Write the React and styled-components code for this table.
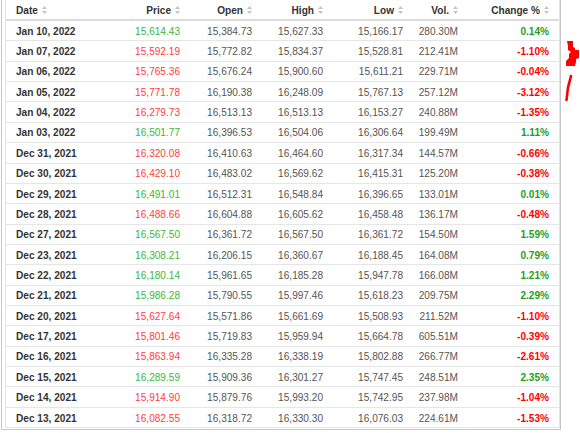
import React from 'react';
import styled, { createGlobalStyle } from 'styled-components';

const GlobalStyle = createGlobalStyle`
  body {
    margin: 0;
    background: #fff;
    font-family: 'Liberation Sans', Arial, sans-serif;
    overflow: hidden;
  }
`;

const rows = [
  ['Jan 10, 2022', '15,614.43', '15,384.73', '15,627.33', '15,166.17', '280.30M', '0.14%'],
  ['Jan 07, 2022', '15,592.19', '15,772.82', '15,834.37', '15,528.81', '212.41M', '-1.10%'],
  ['Jan 06, 2022', '15,765.36', '15,676.24', '15,900.60', '15,611.21', '229.71M', '-0.04%'],
  ['Jan 05, 2022', '15,771.78', '16,190.38', '16,248.09', '15,767.13', '257.12M', '-3.12%'],
  ['Jan 04, 2022', '16,279.73', '16,513.13', '16,513.13', '16,153.27', '240.88M', '-1.35%'],
  ['Jan 03, 2022', '16,501.77', '16,396.53', '16,504.06', '16,306.64', '199.49M', '1.11%'],
  ['Dec 31, 2021', '16,320.08', '16,410.63', '16,464.60', '16,317.34', '144.57M', '-0.66%'],
  ['Dec 30, 2021', '16,429.10', '16,483.02', '16,569.62', '16,415.31', '125.20M', '-0.38%'],
  ['Dec 29, 2021', '16,491.01', '16,512.31', '16,548.84', '16,396.65', '133.01M', '0.01%'],
  ['Dec 28, 2021', '16,488.66', '16,604.88', '16,605.62', '16,458.48', '136.17M', '-0.48%'],
  ['Dec 27, 2021', '16,567.50', '16,361.72', '16,567.50', '16,361.72', '154.50M', '1.59%'],
  ['Dec 23, 2021', '16,308.21', '16,206.15', '16,360.67', '16,188.45', '164.08M', '0.79%'],
  ['Dec 22, 2021', '16,180.14', '15,961.65', '16,185.28', '15,947.78', '166.08M', '1.21%'],
  ['Dec 21, 2021', '15,986.28', '15,790.55', '15,997.46', '15,618.23', '209.75M', '2.29%'],
  ['Dec 20, 2021', '15,627.64', '15,571.86', '15,661.69', '15,508.93', '211.52M', '-1.10%'],
  ['Dec 17, 2021', '15,801.46', '15,719.83', '15,959.94', '15,664.78', '605.51M', '-0.39%'],
  ['Dec 16, 2021', '15,863.94', '16,335.28', '16,338.19', '15,802.88', '266.77M', '-2.61%'],
  ['Dec 15, 2021', '16,289.59', '15,909.36', '16,301.27', '15,747.45', '248.51M', '2.35%'],
  ['Dec 14, 2021', '15,914.90', '15,879.76', '15,993.20', '15,742.95', '237.98M', '-1.04%'],
  ['Dec 13, 2021', '16,082.55', '16,318.72', '16,330.30', '16,076.03', '224.61M', '-1.53%'],
];

const headers = ['Date', 'Price', 'Open', 'High', 'Low', 'Vol.', 'Change %'];

const Page = styled.div`
  display: flex;
  align-items: flex-start;
  width: 580px;
`;

const Frame = styled.div`
  flex: 0 0 559px;
  margin-left: 1px;
  border: 1px solid #c6c6c6;
  border-top: none;
  padding-left: 3px;
  padding-bottom: 1px;
  box-sizing: border-box;
`;

const Table = styled.div`
  width: 555px;
  border-left: 1px solid #e4e4e4;
  border-right: 1px solid #e4e4e4;
  box-sizing: border-box;
`;

const Row = styled.div`
  display: grid;
  grid-template-columns: 99px 85px 72px 71px 80px 55px 1fr;
  height: ${(p) => (p.$head ? '21px' : '20.37px')};
  box-sizing: border-box;
  border-bottom: ${(p) => (p.$head ? '2px solid #dcdcdc' : '1px solid #e6e6e6')};
  font-size: 10.1px;
`;

const Cell = styled.div`
  display: flex;
  align-items: center;
  justify-content: ${(p) => (p.$left ? 'flex-start' : 'flex-end')};
  padding: ${(p) => (p.$left ? '1px 0 0 10px' : '1px 10px 0 0')};
  color: ${(p) => p.$color || '#555'};
  font-weight: ${(p) => (p.$bold ? 'bold' : 'normal')};
  white-space: nowrap;
`;

const HeadCell = styled(Cell)`
  color: #333;
  font-weight: bold;
  gap: 4px;
`;

const SortIcon = () => (
  <svg width="5" height="8" viewBox="0 0 5 8">
    <path d="M2.5 0 L5 3 L0 3 Z M2.5 8 L5 5 L0 5 Z" fill="#c4c4c4" />
  </svg>
);

const Mark = styled.svg`
  flex: 0 0 17px;
  display: block;
  margin-top: 40px;
  margin-left: 3px;
`;

const up = (v) => !v.startsWith('-');

export default function App() {
  return (
    <Page>
      <GlobalStyle />
      <Frame>
        <Table>
          <Row $head>
            {headers.map((h, i) => (
              <HeadCell key={h} $left={i === 0}>
                {h}
                <SortIcon />
              </HeadCell>
            ))}
          </Row>
          {rows.map((r) => {
            const pos = up(r[6]);
            return (
              <Row key={r[0]}>
                <Cell $left $bold $color="#333">{r[0]}</Cell>
                <Cell $color={pos ? '#41b53a' : '#ff4040'}>{r[1]}</Cell>
                <Cell>{r[2]}</Cell>
                <Cell>{r[3]}</Cell>
                <Cell>{r[4]}</Cell>
                <Cell>{r[5]}</Cell>
                <Cell $bold $color={pos ? '#1f9e1f' : '#ff0000'}>{r[6]}</Cell>
              </Row>
            );
          })}
        </Table>
      </Frame>
      <Mark width="17" height="64" viewBox="0 0 17 64">
        <path
          d="M3 1 H9 V7 L11 8 V10 H15 V18 L12 19 V22 L11 26 H2 V21 L5 18 V14 L7 12 L4 10 V6 Z"
          fill="#ff0000"
        />
        <path d="M7 36 C5 42 3 50 2.5 60" stroke="#ff0000" strokeWidth="2.6" fill="none" strokeLinecap="round" />
      </Mark>
    </Page>
  );
}
